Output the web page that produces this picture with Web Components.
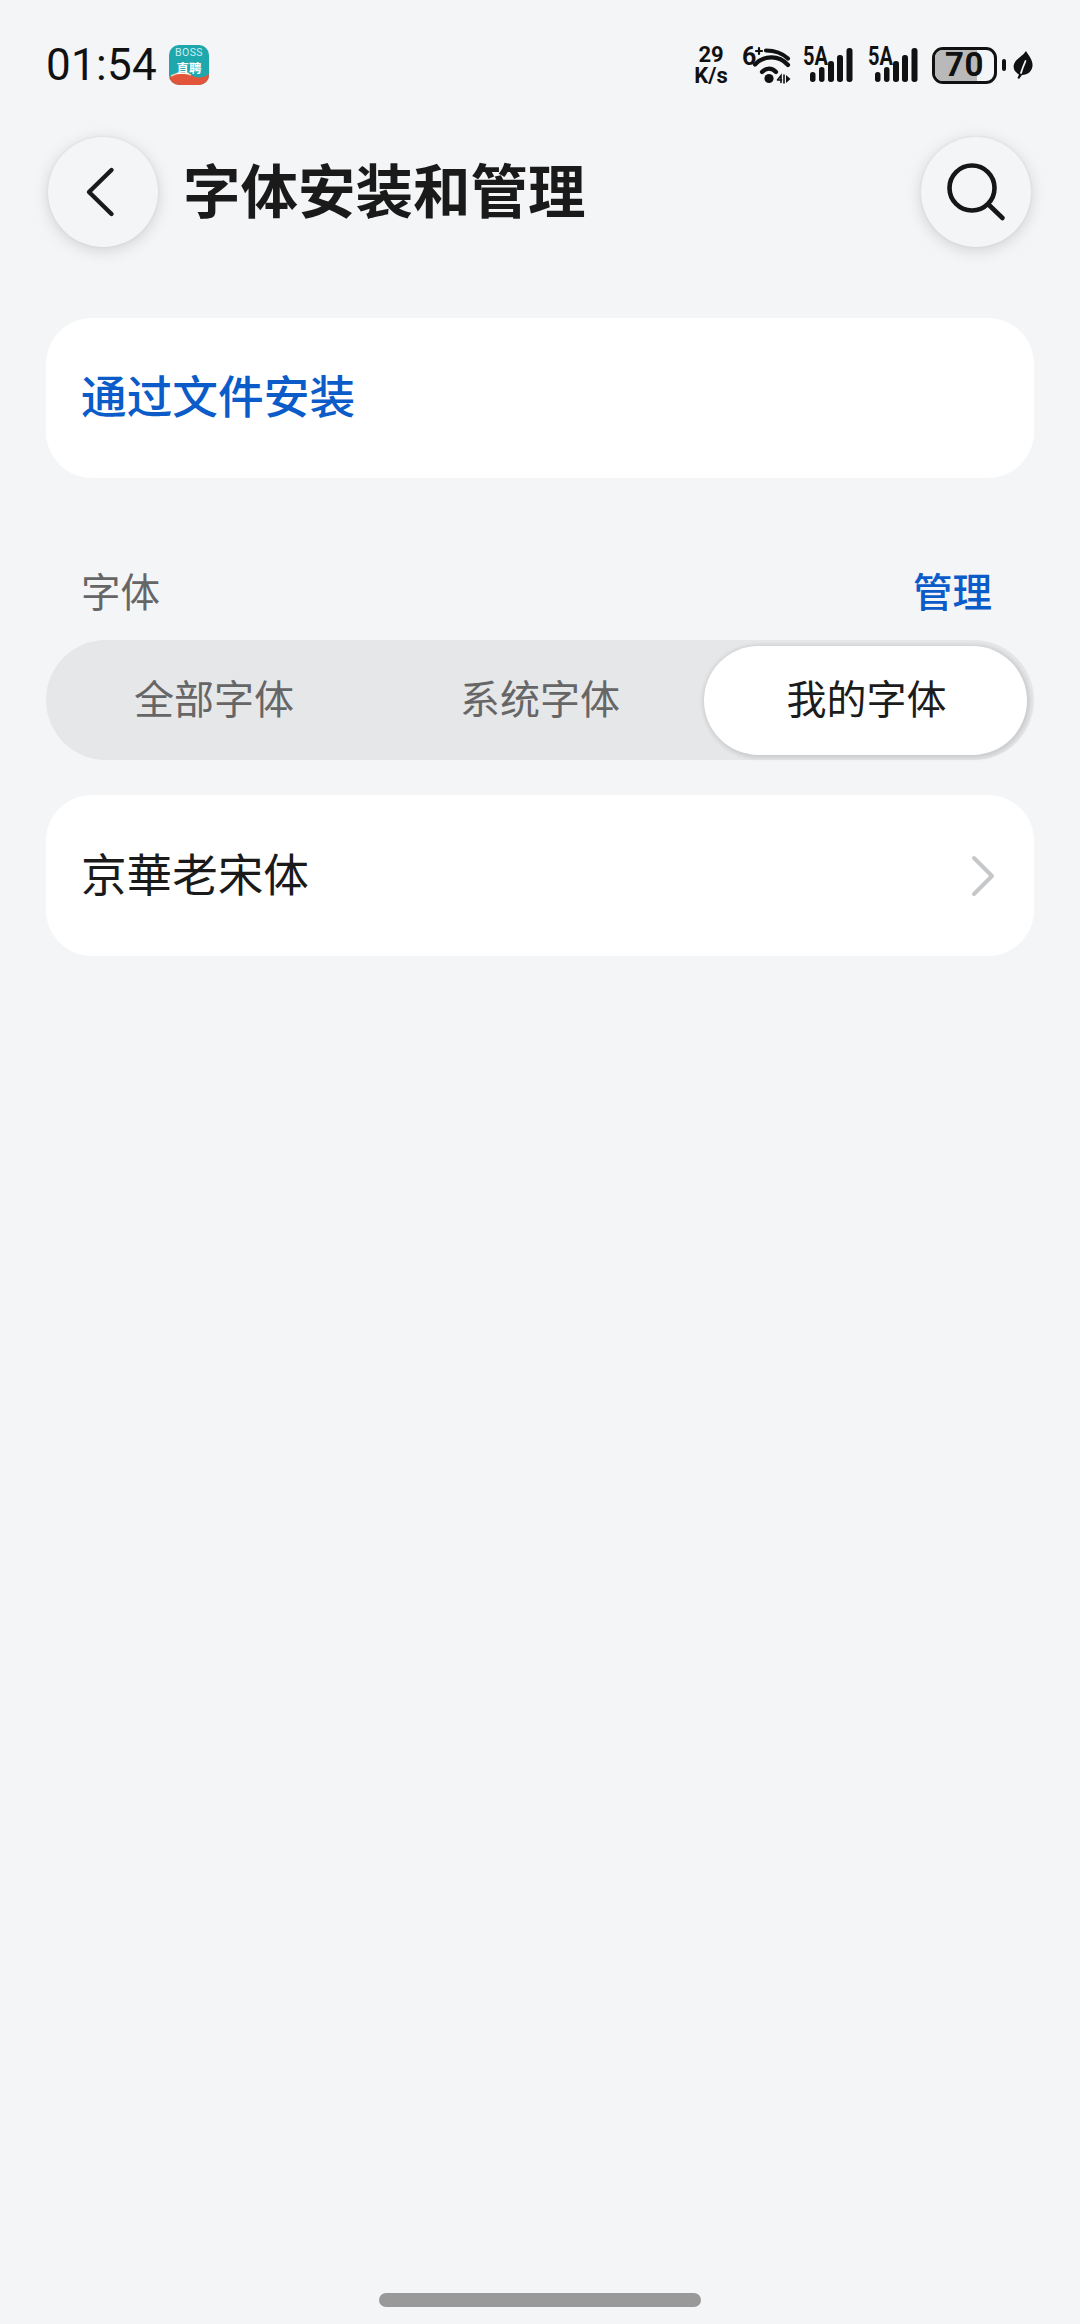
<!DOCTYPE html>
<html lang="zh">
<head>
<meta charset="utf-8">
<title>字体安装和管理</title>
<style>
    html, body { margin: 0; padding: 0; background: #f3f5f7; }
    body { font-family: "Noto Sans CJK SC", "Noto Sans", sans-serif; }
</style>
</head>
<body>
<app-page>
    <status-bar></status-bar>
    <title-bar heading="字体安装和管理"></title-bar>
    <action-card>通过文件安装</action-card>
    <section-header action="管理">字体</section-header>
    <seg-tabs active="2">
        <span>全部字体</span>
        <span>系统字体</span>
        <span>我的字体</span>
    </seg-tabs>
    <font-row>京華老宋体</font-row>
    <home-bar></home-bar>
</app-page>

<script>
const SANS = `"Noto Sans CJK SC", "Noto Sans", sans-serif`;

class Base extends HTMLElement {
    constructor() {
        super();
        this.attachShadow({ mode: "open" });
    }
    render(html) {
        const t = document.createElement("template");
        t.innerHTML = html;
        this.shadowRoot.append(t.content.cloneNode(true));
    }
}

class AppPage extends Base {
    connectedCallback() {
        this.render(/*html*/`
        <style>
            :host { display: flex; flex-direction: column; width: 1080px; height: 2324px; box-sizing: border-box; background: #f3f5f7; overflow: hidden; }
        </style>
        <slot></slot>`);
    }
}

class StatusBar extends Base {
    connectedCallback() {
        const signal = /*html*/`
            <div class="sig">
                <span class="net">5A</span>
                <svg width="50" height="36" viewBox="0 0 50 36" fill="#111">
                    <rect x="7" y="25" width="5.5" height="10" rx="2.7"/>
                    <rect x="16" y="20" width="5.5" height="15" rx="2.7"/>
                    <rect x="25" y="14" width="6" height="21" rx="2.7"/>
                    <rect x="34" y="8" width="6" height="27" rx="2.7"/>
                    <rect x="43.5" y="1" width="6" height="34" rx="2.7"/>
                </svg>
            </div>`;
        this.render(/*html*/`
        <style>
            :host { display: flex; align-items: center; height: 40px; padding: 45px 47px 0 46px; color: #111; }
            .time { font: 400 44px/40px Roboto, sans-serif; letter-spacing: .3px; width: 123px; }
            .right { margin-left: auto; display: flex; align-items: center; height: 40px; }
            .speed { display: flex; flex-direction: column; align-items: center; width: 36px; font: 700 22px/21px Roboto, sans-serif; margin-right: 13px; }
            .wifi { position: relative; width: 50px; height: 40px; margin-right: 11px; }
            .wifi span { position: absolute; left: 0; top: 2px; font: 700 25px/20px Roboto, sans-serif; }
            .wifi svg { position: absolute; left: 0; top: 0; }
            .sig { position: relative; width: 50px; height: 36px; margin-right: 15px; }
            .sig .net { position: absolute; left: 0; top: -1px; font: 700 25px/22px Roboto, sans-serif; transform: scaleX(.8); transform-origin: left center; }
            .sig svg { position: absolute; left: 0; top: 0; }
            .battery { position: relative; box-sizing: border-box; width: 65px; height: 37px; border: 3.5px solid #111; border-radius: 11px; overflow: hidden; display: flex; align-items: center; justify-content: center; margin-left: -1px; }
            .battery i { position: absolute; left: 0; top: 0; bottom: 0; width: 42px; background: #b9b9b9; }
            .battery b { position: relative; font: 700 33px/30px Roboto, sans-serif; letter-spacing: 0.5px; }
            .nub { width: 4px; height: 12px; border-radius: 2px; background: #111; margin: 0 7px 0 5px; }
        </style>
        <span class="time">01:54</span>
        <svg width="40" height="40" viewBox="0 0 40 40" style="flex:none">
            <defs><clipPath id="c"><rect width="40" height="40" rx="10"/></clipPath></defs>
            <g clip-path="url(#c)">
                <rect width="40" height="40" fill="#1fa7ae"/>
                <path d="M0 33 C8 26 16 27 24 31 C30 34 36 32 40 29 V40 H0 Z" fill="#e2553a"/>
                <path d="M2 31 C9 27 15 27 22 30" stroke="#f0c9a8" stroke-width="1.5" fill="none"/>
                <text x="20" y="10.7" text-anchor="middle" font-family="Roboto, sans-serif" font-size="10.5" letter-spacing=".4" fill="#cdeef0">BOSS</text>
                <text x="20" y="28" text-anchor="middle" font-family="${SANS}" font-size="12.5" font-weight="700" fill="#fff">直聘</text>
            </g>
        </svg>
        <div class="right">
            <div class="speed"><span>29</span><span>K/s</span></div>
            <div class="wifi">
                <span>6</span>
                <svg width="50" height="40" viewBox="0 0 50 40" fill="none" stroke="#111" stroke-linecap="round">
                    <path d="M17 3 v6 M14 6 h6" stroke-width="2.2"/>
                    <path d="M24 5.5 C32 5.5 40 8 46 13.5" stroke-width="4.2"/>
                    <path d="M13 19.5 C22 10 37 10 46 20" stroke-width="4.2"/>
                    <path d="M20 27 C24 22.5 30 22.5 34 27" stroke-width="4.2"/>
                    <circle cx="27" cy="33.5" r="4.6" fill="#111" stroke="none"/>
                    <path d="M35.5 35 L39 30.5 V37.5 M35.5 35 H39.5 M42 30 V38" stroke-width="1.6"/>
                    <path d="M44 30 L48.5 34 L44 38 Z" fill="#111" stroke="none"/>
                </svg>
            </div>
            ${signal}${signal}
            <div class="battery"><i></i><b>70</b></div>
            <div class="nub"></div>
            <svg width="20" height="28" viewBox="0 0 20 28" fill="#111">
                <path d="M13 0 C16 5 20 9 19.5 15 C19 20 15 24 9 24 L6 28 L4.5 27 L6 23.5 C2 21 0 18 .8 14 C2 8 9 6 13 0 Z"/>
                <path d="M8 22 C9.5 17 11 13.5 12.5 10" fill="none" stroke="#f3f5f7" stroke-width="1.8" stroke-linecap="round"/>
            </svg>
        </div>`);
    }
}

class RoundButton extends Base {
    connectedCallback() {
        this.render(/*html*/`
        <style>
            :host { display: flex; align-items: center; justify-content: center; flex: none; width: 110px; height: 110px; border-radius: 50%; background: #f4f5f7; box-shadow: 0 3px 16px rgba(0,0,0,.15), 0 0 3px rgba(0,0,0,.07); }
        </style>
        <slot></slot>`);
    }
}

class TitleBar extends Base {
    connectedCallback() {
        this.render(/*html*/`
        <style>
            :host { display: flex; align-items: center; height: 110px; margin-top: 52px; padding: 0 49px 0 48px; }
            h1 { margin: 0 0 8px 25px; flex: 1; font: 700 57.5px/102px ${SANS}; color: #1a1a1a; white-space: nowrap; }
        </style>
        <round-button>
            <svg width="110" height="110" viewBox="0 0 110 110" fill="none" stroke="#1a1a1a" stroke-width="4.4" stroke-linecap="round" stroke-linejoin="round">
                <path d="M63.5 33 L41 55 L63.5 77"/>
            </svg>
        </round-button>
        <h1>${this.getAttribute("heading")}</h1>
        <round-button>
            <svg width="110" height="110" viewBox="0 0 110 110" fill="none" stroke="#161616" stroke-width="4.6" stroke-linecap="round">
                <circle cx="51" cy="51" r="22.5"/>
                <path d="M68 68 L81.5 81"/>
            </svg>
        </round-button>`);
    }
}

class ActionCard extends Base {
    connectedCallback() {
        this.render(/*html*/`
        <style>
            :host { display: flex; align-items: center; box-sizing: border-box; height: 160px; margin: 71px 46px 0; padding: 0 35px 6px; border-radius: 46px; background: #fff; color: #0b5bc9; font: 500 45.7px/1 ${SANS}; }
        </style>
        <slot></slot>`);
    }
}

class SectionHeader extends Base {
    connectedCallback() {
        this.render(/*html*/`
        <style>
            :host { display: flex; align-items: center; justify-content: space-between; box-sizing: border-box; height: 60px; margin: 84px 0 0; padding: 0 88px 5px 81px; color: #666; font: 400 39.5px/55px ${SANS}; }
            span { color: #0b5bc9; font-weight: 500; }
        </style>
        <slot></slot>
        <span>${this.getAttribute("action")}</span>`);
    }
}

class SegTabs extends Base {
    connectedCallback() {
        const active = Number(this.getAttribute("active"));
        [...this.children].forEach((el, i) => { if (i === active) el.setAttribute("slot", "on"); });
        this.render(/*html*/`
        <style>
            :host { display: grid; grid-template-columns: 326px 326px 323px; height: 120px; box-sizing: border-box; margin: 18px 46px 0; padding: 6px 7px 5px 6px; border-radius: 60px; background: #e6e7e9; color: #666; font: 400 40px/1 ${SANS}; }
            ::slotted(span) { display: flex; align-items: center; justify-content: center; box-sizing: border-box; padding: 0 2px 7px 0; }
            ::slotted([slot="on"]) { color: #1c1c1c; background: #fff; border-radius: 55px; padding: 0 0 7px 2px; box-shadow: 1px 1px 4px 2px rgba(0,0,0,.12); }
        </style>
        <slot></slot>
        <slot name="on"></slot>`);
    }
}

class FontRow extends Base {
    connectedCallback() {
        this.render(/*html*/`
        <style>
            :host { display: flex; align-items: center; justify-content: space-between; box-sizing: border-box; height: 161px; margin: 35px 46px 0; padding: 0 39px 0 35px; border-radius: 46px; background: #fff; color: #1a1a1a; font: 400 45.6px/1 "Noto Sans CJK TC", serif; }
            span { display: block; padding-bottom: 6px; }
        </style>
        <span><slot></slot></span>
        <svg width="24" height="42" viewBox="0 0 24 42" fill="none" stroke="#c5c7c9" stroke-width="4" stroke-linecap="round" stroke-linejoin="round">
            <path d="M3 3 L21 21 L3 39"/>
        </svg>`);
    }
}

class HomeBar extends Base {
    connectedCallback() {
        this.render(/*html*/`
        <style>
            :host { display: block; width: 322px; height: 14px; border-radius: 7px; background: #999; margin: auto auto 17px; }
        </style>`);
    }
}

customElements.define("app-page", AppPage);
customElements.define("status-bar", StatusBar);
customElements.define("round-button", RoundButton);
customElements.define("title-bar", TitleBar);
customElements.define("action-card", ActionCard);
customElements.define("section-header", SectionHeader);
customElements.define("seg-tabs", SegTabs);
customElements.define("font-row", FontRow);
customElements.define("home-bar", HomeBar);
</script>
</body>
</html>
